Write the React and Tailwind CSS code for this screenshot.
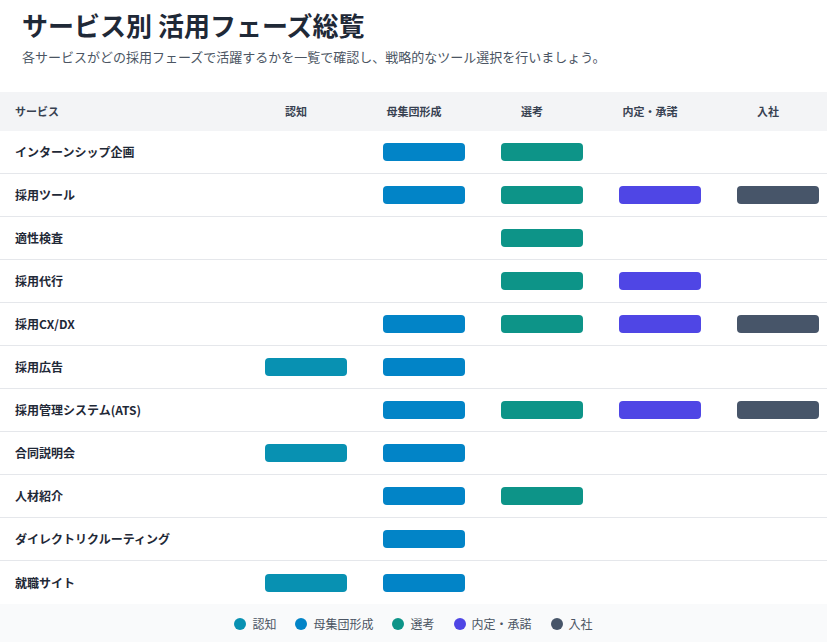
const phases = ["認知", "母集団形成", "選考", "内定・承諾", "入社"];
const colors = ["bg-[#0891b2]", "bg-[#0284c7]", "bg-[#0d9488]", "bg-[#4f46e5]", "bg-[#475569]"];
const rows = [
  ["インターンシップ企画", [0, 1, 1, 0, 0]],
  ["採用ツール", [0, 1, 1, 1, 1]],
  ["適性検査", [0, 0, 1, 0, 0]],
  ["採用代行", [0, 0, 1, 1, 0]],
  ["採用CX/DX", [0, 1, 1, 1, 1]],
  ["採用広告", [1, 1, 0, 0, 0]],
  ["採用管理システム(ATS)", [0, 1, 1, 1, 1]],
  ["合同説明会", [1, 1, 0, 0, 0]],
  ["人材紹介", [0, 1, 1, 0, 0]],
  ["ダイレクトリクルーティング", [0, 1, 0, 0, 0]],
  ["就職サイト", [1, 1, 0, 0, 0]],
];

export default function App() {
  return (
    <div className="w-[827px] h-[642px] overflow-hidden bg-white text-[#1f2937]" style={{ fontFamily: '"Noto Sans CJK JP", "Noto Sans", sans-serif' }}>
      <div className="pl-[22px] pt-[6px] h-[92px]">
        <h1 className="text-[26px] font-bold leading-[38px] text-[#1f2937]">サービス別 活用フェーズ総覧</h1>
        <p className="text-[13px] leading-[20px] text-[#4b5563] mt-[3px]">各サービスがどの採用フェーズで活躍するかを一覧で確認し、戦略的なツール選択を行いましょう。</p>
      </div>
      <div className="flex h-[39px] items-center bg-[#f3f4f6] text-[11px] font-bold text-[#374151]">
        <div className="w-[247px] pl-[15px]">サービス</div>
        {phases.map((p) => (
          <div key={p} className="w-[118px] shrink-0 text-center">{p}</div>
        ))}
      </div>
      {rows.map(([name, flags], i) => (
        <div key={name} className={`flex h-[43px] items-center ${i < rows.length - 1 ? "border-b border-[#e5e7eb]" : ""}`}>
          <div className="w-[247px] shrink-0 pl-[15px] text-[12px] font-bold text-[#1f2937]">{name}</div>
          {flags.map((f, j) => (
            <div key={j} className="w-[118px] shrink-0 flex justify-center">
              {f ? <div className={`w-[82px] h-[18px] rounded-[4px] ${colors[j]}`} /> : null}
            </div>
          ))}
        </div>
      ))}
      <div className="h-[39px] bg-[#f9fafb] flex items-center justify-center gap-[19px] text-[12px] text-[#4b5563]">
        {phases.map((p, j) => (
          <div key={p} className="flex items-center gap-[6px]">
            <span className={`w-[12px] h-[12px] rounded-full ${colors[j]}`} />
            {p}
          </div>
        ))}
      </div>
    </div>
  );
}
